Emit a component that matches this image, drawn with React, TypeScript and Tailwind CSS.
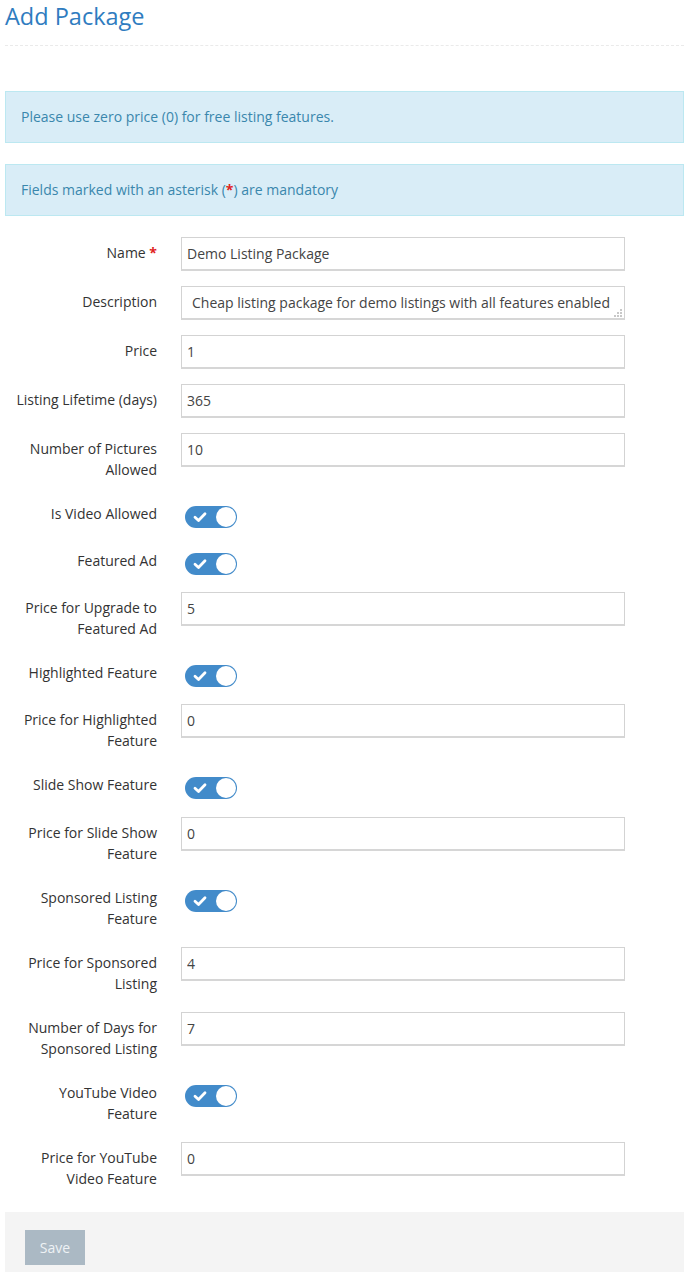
import type { ReactNode } from "react";

type Row =
  | { kind: "input"; label: string; value: string; required?: boolean }
  | { kind: "textarea"; label: string; value: string }
  | { kind: "toggle"; label: string; tall?: boolean };

const rows: Row[] = [
  { kind: "input", label: "Name", value: "Demo Listing Package", required: true },
  { kind: "textarea", label: "Description", value: "Cheap listing package for demo listings with all features enabled" },
  { kind: "input", label: "Price", value: "1" },
  { kind: "input", label: "Listing Lifetime (days)", value: "365" },
  { kind: "input", label: "Number of Pictures\nAllowed", value: "10" },
  { kind: "toggle", label: "Is Video Allowed" },
  { kind: "toggle", label: "Featured Ad" },
  { kind: "input", label: "Price for Upgrade to\nFeatured Ad", value: "5" },
  { kind: "toggle", label: "Highlighted Feature" },
  { kind: "input", label: "Price for Highlighted\nFeature", value: "0" },
  { kind: "toggle", label: "Slide Show Feature", tall: true },
  { kind: "input", label: "Price for Slide Show\nFeature", value: "0" },
  { kind: "toggle", label: "Sponsored Listing\nFeature" },
  { kind: "input", label: "Price for Sponsored\nListing", value: "4" },
  { kind: "input", label: "Number of Days for\nSponsored Listing", value: "7" },
  { kind: "toggle", label: "YouTube Video\nFeature" },
  { kind: "input", label: "Price for YouTube\nVideo Feature", value: "0" }
];

const inputBase =
  "h-[34px] w-[444px] border border-[#d3d3d3] border-b-2 border-b-[#d6d6d6] bg-white text-[14px] leading-[20px] text-[#444] outline-none";

function Asterisk() {
  return <span className="text-[#e02222] font-bold">*</span>;
}

function Toggle() {
  return (
    <div className="relative ml-[4px] h-[22px] w-[52px] rounded-full bg-[#428bca]">
      <svg className="absolute left-[8px] top-[5px]" width="14" height="12" viewBox="0 0 14 12">
        <path d="M2 6.2 L5.5 9.5 L12 2.8" fill="none" stroke="#fff" strokeWidth="2.8" strokeLinecap="round" strokeLinejoin="round" />
      </svg>
      <span className="absolute right-[1px] top-[1px] h-[20px] w-[20px] rounded-full bg-white" />
    </div>
  );
}

function ResizeDots() {
  return (
    <svg className="pointer-events-none absolute bottom-[2px] right-[2px]" width="10" height="10" viewBox="0 0 10 10">
      <rect x="7" y="1" width="2" height="2" fill="#c8c8c8" />
      <rect x="4" y="4" width="2" height="2" fill="#c8c8c8" />
      <rect x="7" y="4" width="2" height="2" fill="#c8c8c8" />
      <rect x="1" y="7" width="2" height="2" fill="#c8c8c8" />
      <rect x="4" y="7" width="2" height="2" fill="#c8c8c8" />
      <rect x="7" y="7" width="2" height="2" fill="#c8c8c8" />
    </svg>
  );
}

function FormRow({ label, required, children }: { label: string; required?: boolean; children: ReactNode }) {
  return (
    <div className="mb-[15px] flex items-start">
      <label className="w-[152px] shrink-0 whitespace-pre-line pb-[3px] pt-[5px] text-right text-[14px] leading-[21px] text-[#333]">
        {label}
        {required && (
          <>
            {" "}
            <Asterisk />
          </>
        )}
      </label>
      <div className="ml-[24px]">{children}</div>
    </div>
  );
}

export default function App() {
  return (
    <div className="min-h-[1272px] bg-white pl-[5px] pr-[7px] font-['Open_Sans',sans-serif]">
      <div className="border-b border-dashed border-[#eaeaea] pb-[12px]">
        <h1 className="text-[23.5px] font-normal leading-[33px] text-[#2f7cc0]">Add Package</h1>
      </div>

      <div className="mt-[45px] border border-[#bce8f1] bg-[#d9edf7] p-[15px] text-[14px] leading-[20px] text-[#3a87ad]">
        Please use zero price (0) for free listing features.
      </div>
      <div className="mt-[21px] border border-[#bce8f1] bg-[#d9edf7] p-[15px] text-[14px] leading-[20px] text-[#3a87ad]">
        Fields marked with an asterisk (<Asterisk />) are mandatory
      </div>

      <form className="mt-[21px]">
        {rows.map((row) => {
          if (row.kind === "toggle") {
            return (
              <FormRow key={row.label} label={row.label}>
                <div className={row.tall ? "pb-[3px] pt-[8px]" : "pb-[2px] pt-[8px]"}>
                  <Toggle />
                </div>
              </FormRow>
            );
          }
          if (row.kind === "textarea") {
            return (
              <FormRow key={row.label} label={row.label}>
                <div className="relative">
                  <textarea
                    defaultValue={row.value}
                    wrap="off"
                    rows={1}
                    className={`${inputBase} block resize-none overflow-hidden py-[6px] pl-[10px] pr-[4px]`}
                  />
                  <ResizeDots />
                </div>
              </FormRow>
            );
          }
          return (
            <FormRow key={row.label} label={row.label} required={row.required}>
              <input type="text" defaultValue={row.value} className={`${inputBase} block px-[5px]`} />
            </FormRow>
          );
        })}

        <div className="mt-[20px] bg-[#f4f4f4] px-[20px] pb-[20px] pt-[18px]">
          <button
            type="button"
            disabled
            className="h-[35px] w-[60px] bg-[#abb9c4] text-[14px] text-[#eef2f5]"
          >
            Save
          </button>
        </div>
      </form>
    </div>
  );
}
